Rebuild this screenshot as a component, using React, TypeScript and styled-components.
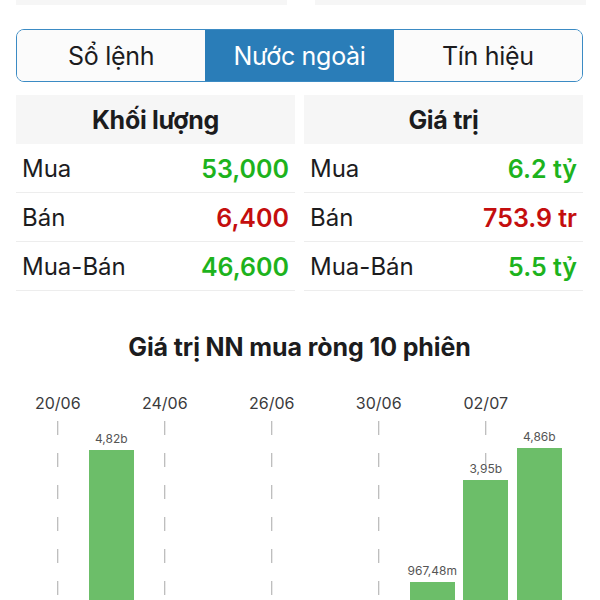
import React from 'react'
import styled, { createGlobalStyle } from 'styled-components'

const GlobalStyle = createGlobalStyle`
  html, body {
    margin: 0;
    padding: 0;
    background: #fff;
    overflow: hidden;
  }
  body {
    font-family: Inter, "Noto Sans", "Liberation Sans", sans-serif;
    color: #1c1c1e;
  }
`;

type Stat = { label: string; value: string; tone: 'up' | 'down' };

const volume: Stat[] = [
  { label: 'Mua', value: '53,000', tone: 'up' },
  { label: 'Bán', value: '6,400', tone: 'down' },
  { label: 'Mua-Bán', value: '46,600', tone: 'up' },
];

const amount: Stat[] = [
  { label: 'Mua', value: '6.2 tỷ', tone: 'up' },
  { label: 'Bán', value: '753.9 tr', tone: 'down' },
  { label: 'Mua-Bán', value: '5.5 tỷ', tone: 'up' },
];

// 10 phiên, đơn vị tỷ; chỉ các phiên mua ròng có cột
const sessions: { date: string; value: number; label?: string }[] = [
  { date: '20/06', value: 0 },
  { date: '21/06', value: 4.82, label: '4,82b' },
  { date: '24/06', value: 0 },
  { date: '25/06', value: 0 },
  { date: '26/06', value: 0 },
  { date: '27/06', value: 0 },
  { date: '30/06', value: 0 },
  { date: '01/07', value: 0.96748, label: '967,48m' },
  { date: '02/07', value: 3.95, label: '3,95b' },
  { date: '03/07', value: 4.86, label: '4,86b' },
];

const PX_PER_B = 34.3;

export default function App(): JSX.Element {
  return <Page>
    <GlobalStyle />
    <TopStrip>
      <StripCell />
      <StripCell />
    </TopStrip>

    <Segments>
      <Segment>Sổ lệnh</Segment>
      <Segment $active>Nước ngoài</Segment>
      <Segment>Tín hiệu</Segment>
    </Segments>

    <Tables>
      <Column>
        <HeadCell>Khối lượng</HeadCell>
        {volume.map(s => <Row key={s.label}>
          <Label>{s.label}</Label>
          <Value $tone={s.tone}>{s.value}</Value>
        </Row>)}
      </Column>
      <Column>
        <HeadCell>Giá trị</HeadCell>
        {amount.map(s => <Row key={s.label}>
          <Label>{s.label}</Label>
          <Value $tone={s.tone}>{s.value}</Value>
        </Row>)}
      </Column>
    </Tables>

    <ChartTitle>Giá trị NN mua ròng 10 phiên</ChartTitle>

    <Chart>
      {sessions.map((s, i) => <Slot key={s.date}>
        <DateLabel>{i % 2 === 0 ? s.date : ''}</DateLabel>
        <Plot>
          {i % 2 === 0 && <GridLine />}
          {s.value > 0 && <BarWrap>
            <BarValue>{s.label}</BarValue>
            <Bar style={{ height: s.value * PX_PER_B }} />
          </BarWrap>}
        </Plot>
      </Slot>)}
    </Chart>
  </Page>;
}

const Page = styled.div`
  display: flex;
  flex-direction: column;
  padding: 0 17px 0 16px;
`;

const TopStrip = styled.div`
  display: grid;
  grid-template-columns: 1fr 1fr;
  gap: 28px;
  margin-right: -3px;
`;

const StripCell = styled.div`
  height: 5px;
  background: #f6f6f6;
`;

const Segments = styled.div`
  display: flex;
  margin-top: 24px;
  height: 53px;
  box-sizing: border-box;
  border: 1.5px solid #3b8bc4;
  border-radius: 8px;
  overflow: hidden;
`;

const Segment = styled.div<{ $active?: boolean }>`
  flex: 1;
  display: flex;
  align-items: center;
  justify-content: center;
  font-size: 25px;
  letter-spacing: -0.3px;
  background: ${p => p.$active ? '#2a7db8' : '#fbfbfb'};
  color: ${p => p.$active ? '#fff' : '#1c1c1e'};
`;

const Tables = styled.div`
  display: grid;
  grid-template-columns: 1fr 1fr;
  gap: 9px;
  margin-top: 13px;
`;

const Column = styled.div`
  display: flex;
  flex-direction: column;
`;

const HeadCell = styled.div`
  height: 49px;
  display: flex;
  align-items: center;
  justify-content: center;
  background: #f6f6f6;
  font-size: 25px;
  font-weight: 700;
  letter-spacing: -0.3px;
`;

const Row = styled.div`
  height: 49px;
  box-sizing: border-box;
  display: flex;
  align-items: center;
  justify-content: space-between;
  padding: 1px 6px 0 6px;
  border-bottom: 1px solid #ededed;
`;

const Label = styled.span`
  font-size: 24px;
  color: #1c1c1e;
`;

const Value = styled.span<{ $tone: 'up' | 'down' }>`
  font-size: 25px;
  font-weight: 600;
  color: ${p => p.$tone === 'up' ? '#1db31d' : '#c40e0e'};
`;

const ChartTitle = styled.div`
  margin-top: 41px;
  text-align: center;
  font-size: 25px;
  font-weight: 700;
  letter-spacing: -0.1px;
`;

const Chart = styled.div`
  display: grid;
  grid-template-columns: repeat(10, 53.5px);
  margin: 31px 0 0 15px;
`;

const Slot = styled.div`
  display: flex;
  flex-direction: column;
  align-items: center;
`;

const DateLabel = styled.div`
  height: 24px;
  font-size: 16px;
  color: #3a3a3c;
  white-space: nowrap;
`;

const Plot = styled.div`
  position: relative;
  width: 100%;
  height: 198px;
  display: flex;
  justify-content: center;
  align-items: flex-end;
`;

const GridLine = styled.div`
  position: absolute;
  left: 50%;
  top: 4px;
  bottom: 0;
  width: 1.5px;
  transform: translateX(-50%);
  background: repeating-linear-gradient(to bottom, #a9a9a9 0 14px, transparent 14px 32px);
`;

const BarWrap = styled.div`
  position: relative;
  display: flex;
  flex-direction: column;
  align-items: center;
  gap: 4px;
`;

const BarValue = styled.span`
  font-size: 12px;
  color: #555;
`;

const Bar = styled.div`
  width: 45px;
  background: #6cbe69;
`;
